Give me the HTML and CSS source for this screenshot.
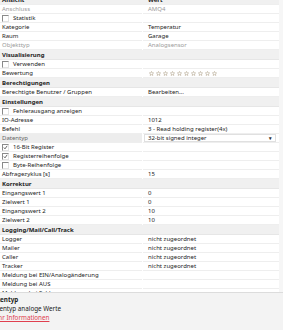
FILE: index.html
```html
<!DOCTYPE html>
<html lang="de">
<head>
    <meta charset="UTF-8">
    <title>Eigenschaften</title>
    <link rel="stylesheet" href="styles.css">
</head>
<body>

<div class="panel">
    <div class="grid">
        <div class="row head"><span class="k">Ansicht</span><span class="v">Wert</span></div>
        <div class="row"><span class="k off">Anschluss</span><span class="v off">AMQ4</span></div>
        <div class="row"><span class="k chk"><i class="box"></i>Statistik</span><span class="v"></span></div>
        <div class="row"><span class="k">Kategorie</span><span class="v">Temperatur</span></div>
        <div class="row"><span class="k">Raum</span><span class="v">Garage</span></div>
        <div class="row"><span class="k off">Objekttyp</span><span class="v off">Analogsensor</span></div>
        <div class="row section">Visualisierung</div>
        <div class="row"><span class="k chk"><i class="box"></i>Verwenden</span><span class="v"></span></div>
        <div class="row"><span class="k">Bewertung</span><span class="v stars" id="stars"></span></div>
        <div class="row section">Berechtigungen</div>
        <div class="row"><span class="k">Berechtigte Benutzer / Gruppen</span><span class="v">Bearbeiten...</span></div>
        <div class="row section">Einstellungen</div>
        <div class="row"><span class="k chk"><i class="box"></i>Fehlerausgang anzeigen</span><span class="v"></span></div>
        <div class="row"><span class="k">IO-Adresse</span><span class="v">1012</span></div>
        <div class="row"><span class="k">Befehl</span><span class="v">3 - Read holding register(4x)</span></div>
        <div class="row"><span class="k selected">Datentyp</span><span class="v"><span class="select">32-bit signed integer<b>&#9662;</b></span></span></div>
        <div class="row"><span class="k chk"><i class="box on"><svg viewBox="0 0 6 6"><polyline points="1,3 2.4,4.6 5,1"/></svg></i>16-Bit Register</span><span class="v"></span></div>
        <div class="row"><span class="k chk"><i class="box on"><svg viewBox="0 0 6 6"><polyline points="1,3 2.4,4.6 5,1"/></svg></i>Registerreihenfolge</span><span class="v"></span></div>
        <div class="row"><span class="k chk"><i class="box"></i>Byte-Reihenfolge</span><span class="v"></span></div>
        <div class="row"><span class="k">Abfragezyklus [s]</span><span class="v">15</span></div>
        <div class="row section">Korrektur</div>
        <div class="row"><span class="k">Eingangswert 1</span><span class="v">0</span></div>
        <div class="row"><span class="k">Zielwert 1</span><span class="v">0</span></div>
        <div class="row"><span class="k">Eingangswert 2</span><span class="v">10</span></div>
        <div class="row"><span class="k">Zielwert 2</span><span class="v">10</span></div>
        <div class="row section">Logging/Mail/Call/Track</div>
        <div class="row"><span class="k">Logger</span><span class="v">nicht zugeordnet</span></div>
        <div class="row"><span class="k">Mailer</span><span class="v">nicht zugeordnet</span></div>
        <div class="row"><span class="k">Caller</span><span class="v">nicht zugeordnet</span></div>
        <div class="row"><span class="k">Tracker</span><span class="v">nicht zugeordnet</span></div>
        <div class="row"><span class="k">Meldung bei EIN/Analogänderung</span><span class="v"></span></div>
        <div class="row"><span class="k">Meldung bei AUS</span><span class="v"></span></div>
        <div class="row"><span class="k">Meldung bei Fehler</span><span class="v"></span></div>
    </div>

    <div class="help">
        <div class="help-title">Datentyp</div>
        <div>Datentyp analoge Werte</div>
        <a href="#">Mehr Informationen</a>
    </div>
</div>

<script>
    // ten empty rating stars
    const stars = document.getElementById('stars');
    for (let i = 0; i < 10; i++) {
        stars.innerHTML += '<svg viewBox="0 0 10 10"><polygon points="5,0.8 6.2,3.7 9.3,3.9 6.9,5.9 7.7,9 5,7.3 2.3,9 3.1,5.9 0.7,3.9 3.8,3.7"/></svg>';
    }
</script>

</body>
</html>
```

FILE: styles.css
```css
body {
    margin: 0;
    background-color: #f3f3f3;
    font-family: "Noto Sans", "Open Sans", sans-serif;
    font-size: 6px;
    color: #222;
    overflow: hidden;
}
.panel {
    width: 283px;
    height: 330px;
    overflow: hidden;
}
.grid {
    margin-top: -4px;
    width: 279px;
    height: 296px;
    background-color: #fff;
    overflow: hidden;
    border-right: 4px solid #f6f6f6;
}
.row {
    display: grid;
    grid-template-columns: 142px 1fr;
    height: 9px;
    line-height: 8px;
    white-space: nowrap;
}
.k, .v {
    display: flex;
    align-items: center;
    border-bottom: 1px solid #eeeeee;
    overflow: hidden;
}
.k {
    padding-left: 2px;
}
.v {
    padding-left: 5px;
    margin-left: 1px;
}
.off {
    color: #9a9a9a;
}
.head {
    background-color: #f0f0f0;
    font-weight: 700;
}
.section {
    display: flex;
    align-items: center;
    background-color: #f0f0f0;
    font-weight: 700;
    padding-left: 2px;
    border-bottom: 1px solid #e6e6e6;
}
.selected {
    background-color: #ededed;
    color: #666;
}
.chk {
    gap: 4px;
}
.box {
    width: 5px;
    height: 5px;
    border-top: 1px solid #8a8a8a;
    border-left: 1px solid #8a8a8a;
    border-right: 1px solid #e2e2e2;
    border-bottom: 1px solid #e2e2e2;
    background-color: #fff;
    display: flex;
}
.box svg {
    width: 5px;
    height: 5px;
    fill: none;
    stroke: #333;
    stroke-width: 0.9;
}
.stars {
    gap: 2px;
    padding-left: 6px;
}
.stars svg {
    width: 5px;
    height: 5px;
    fill: none;
    stroke: #a89a80;
    stroke-width: 1;
}
.select {
    display: flex;
    justify-content: space-between;
    align-items: center;
    width: 132px;
    height: 8px;
    margin-left: -4px;
    padding-left: 3px;
    border: 1px solid #e0e0e0;
    box-sizing: border-box;
}
.select b {
    font-size: 5px;
    padding-right: 3px;
    color: #333;
}
.help {
    margin-left: -11px;
    padding-top: 2px;
    border-top: 1px solid #dcdcdc;
    line-height: 9px;
    font-size: 6.3px;
}
.help-title {
    font-weight: 700;
}
.help a {
    color: #e0404f;
}
```
